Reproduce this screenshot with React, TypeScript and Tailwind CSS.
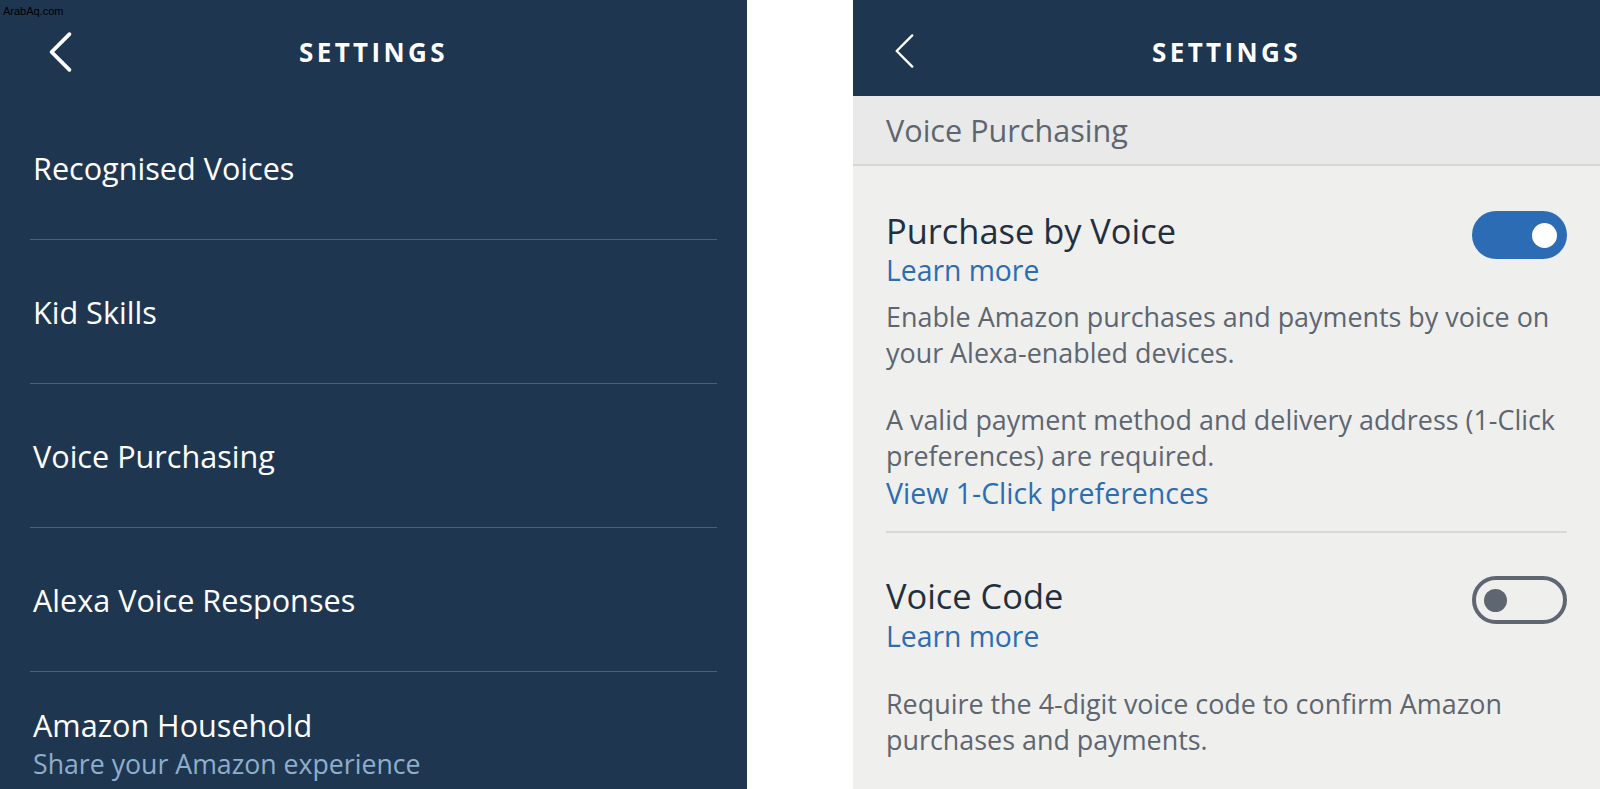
import React from 'react';

const font = { fontFamily: '"Open Sans", "Noto Sans", sans-serif' };

function Chevron({ className, stroke }: { className: string; stroke: number }) {
  return (
    <svg viewBox="0 0 24 40" className={className} fill="none">
      <path
        d="M21 3 L4 20 L21 37"
        stroke="white"
        strokeWidth={stroke}
        strokeLinecap="round"
        strokeLinejoin="round"
      />
    </svg>
  );
}

function Header({ chevron, stroke }: { chevron: string; stroke: number }) {
  return (
    <div className="relative h-[96px] flex items-center justify-center bg-[#1f3651] shrink-0">
      <div className="absolute left-0 top-0 h-full flex items-center">
        <Chevron className={chevron} stroke={stroke} />
      </div>
      <h1 className="text-white font-bold text-[26px] tracking-[3.4px] mt-[8px]">SETTINGS</h1>
    </div>
  );
}

function Toggle({ on }: { on: boolean }) {
  if (on) {
    return (
      <div className="w-[95px] h-[48px] rounded-full bg-[#2c6cb4] flex items-center justify-end pr-[10px] shrink-0">
        <div className="w-[25px] h-[25px] rounded-full bg-white" />
      </div>
    );
  }
  return (
    <div className="w-[95px] h-[48px] rounded-full border-[4px] border-[#5e6671] flex items-center pl-[8px] shrink-0">
      <div className="w-[23px] h-[23px] rounded-full bg-[#5e6671]" />
    </div>
  );
}

const leftItems = ['Recognised Voices', 'Kid Skills', 'Voice Purchasing', 'Alexa Voice Responses'];

export default function App() {
  return (
    <div className="w-[1600px] h-[789px] flex bg-white overflow-hidden" style={font}>
      {/* Left panel */}
      <div className="relative w-[747px] h-full bg-[#1f3651] flex flex-col">
        <span
          className="absolute left-[3px] top-[3px] text-[11px] text-black z-10"
          style={{ fontFamily: '"Liberation Sans", Arial, sans-serif' }}
        >
          ArabAq.com
        </span>
        <Header chevron="w-[26px] h-[42px] ml-[47px] mt-[8px]" stroke={3.6} />
        {leftItems.map((label) => (
          <div key={label} className="mx-[30px] h-[144px] border-b border-[#3f6287] flex items-center pl-[3px] shrink-0">
            <span className="text-white text-[30.6px] leading-[40px]">{label}</span>
          </div>
        ))}
        <div className="mx-[30px] h-[144px] flex flex-col justify-center pl-[3px] shrink-0">
          <span className="text-white text-[30.6px] leading-[40px]">Amazon Household</span>
          <span className="text-[#8eaecb] text-[26.7px] leading-[38px]">Share your Amazon experience</span>
        </div>
      </div>

      {/* Right panel */}
      <div className="ml-[106px] w-[747px] h-full bg-[#efefee] flex flex-col">
        <Header chevron="w-[22px] h-[38px] ml-[40px] mt-[6px]" stroke={2.6} />
        <div className="h-[70px] bg-[#e9e9e9] border-b-2 border-[#d6d6d6] flex items-center px-[33px] shrink-0">
          <span className="text-[#5d6670] text-[30.6px] leading-[40px]">Voice Purchasing</span>
        </div>

        <div className="px-[33px] pt-[45px]">
          <div className="flex justify-between items-start">
            <div className="flex flex-col">
              <span className="text-[#232f3e] text-[34.4px] leading-[40px]">Purchase by Voice</span>
              <span className="text-[#2c6db2] text-[28.3px] leading-[38px]">Learn more</span>
            </div>
            <Toggle on />
          </div>
          <p className="mt-[10px] text-[#5d6670] text-[26.9px] leading-[36px]">
            Enable Amazon purchases and payments by voice on your Alexa-enabled devices.
          </p>
          <p className="mt-[31px] text-[#5d6670] text-[26.9px] leading-[36px]">
            A valid payment method and delivery address (1-Click preferences) are required.
          </p>
          <p className="text-[#2c6db2] text-[28.5px] leading-[38px]">View 1-Click preferences</p>
          <div className="mt-[19px] border-t-2 border-[#d9d9d9]" />

          <div className="mt-[43px] flex justify-between items-start">
            <div className="flex flex-col">
              <span className="text-[#232f3e] text-[34.4px] leading-[40px]">Voice Code</span>
              <span className="text-[#2c6db2] text-[28.3px] leading-[40px]">Learn more</span>
            </div>
            <Toggle on={false} />
          </div>
          <p className="mt-[30px] text-[#5d6670] text-[26.9px] leading-[36px]">
            Require the 4-digit voice code to confirm Amazon purchases and payments.
          </p>
        </div>
      </div>
    </div>
  );
}
